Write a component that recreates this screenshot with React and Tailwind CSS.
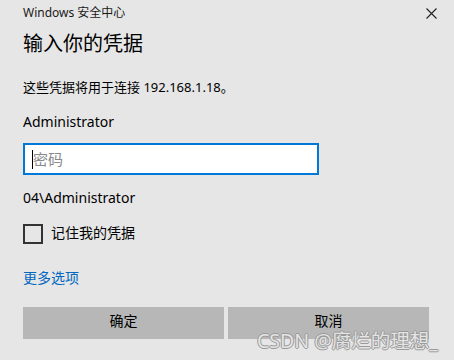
export default function App() {
  return (
    <div
      className="relative w-[454px] h-[360px] overflow-hidden bg-[#e6e6e6] text-[#000] pl-[23px] pr-[25px]"
      style={{ fontFamily: '"Noto Sans", "Noto Sans CJK SC", sans-serif' }}
    >
      {/* Title bar */}
      <div className="flex items-center justify-between h-[26px]">
        <span className="text-[12px] leading-[26px] text-[#1a1a1a]">Windows 安全中心</span>
        <button className="w-[18px] h-[18px] mr-[-11px] flex items-center justify-center" aria-label="关闭">
          <svg width="11" height="11" viewBox="0 0 11 11">
            <path d="M0.5 0.5 L10.5 10.5 M10.5 0.5 L0.5 10.5" stroke="#222" strokeWidth="1.1" fill="none" />
          </svg>
        </button>
      </div>

      <h1 className="mt-[4px] text-[20px] leading-[28px] font-normal">输入你的凭据</h1>

      <p className="mt-[19px] text-[13px] leading-[20px]">这些凭据将用于连接 192.168.1.18。</p>

      <div className="mt-[15px] text-[14px] leading-[20px]">Administrator</div>

      <div className="mt-[11px] w-[296px] h-[32px] bg-white border-2 border-[#0078d7] flex items-center pl-[7px]">
        <span className="w-[1px] h-[19px] bg-black" />
        <span className="text-[15px] text-[#8a8a8a] leading-[20px]">密码</span>
      </div>

      <div className="mt-[13px] text-[14px] leading-[20px]">04\Administrator</div>

      <label className="mt-[16px] flex items-center gap-[8px] h-[20px]">
        <span className="w-[20px] h-[20px] border-2 border-[#333]" />
        <span className="text-[14px] leading-[20px] -mt-[3px]">记住我的凭据</span>
      </label>

      <a className="block mt-[24px] text-[14px] leading-[20px] text-[#0067c0]">更多选项</a>

      <div className="mt-[19px] grid grid-cols-2 gap-[4px]">
        <button className="h-[32px] bg-[#b7b7b7] text-[14px] leading-[20px] pb-[4px]">确定</button>
        <button className="h-[32px] bg-[#b7b7b7] text-[14px] leading-[20px] pb-[4px]">取消</button>
      </div>

      {/* Watermark */}
      <div
        className="absolute left-[257px] top-[331px] text-[19.5px] leading-[20px] text-[#e4e4e4] whitespace-nowrap"
        style={{ textShadow: "-1px 0 #999, 1px 0 #999, 0 1px #999, 0 -1px #999" }}
      >
        CSDN @腐烂的理想_
      </div>
    </div>
  );
}
